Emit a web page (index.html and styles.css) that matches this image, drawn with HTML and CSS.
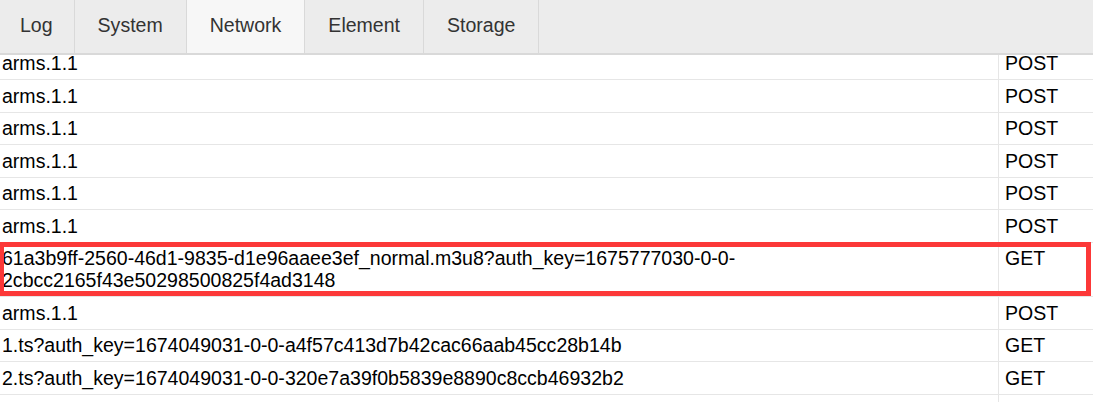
FILE: index.html
```html
<!DOCTYPE html>
<html lang="en">
<head>
<meta charset="utf-8">
<title>Network</title>
<link rel="stylesheet" href="styles.css">
</head>
<body>
<div class="console">
  <nav class="tabs">
    <div class="tab tab-short">Log</div>
    <div class="tab">System</div>
    <div class="tab active">Network</div>
    <div class="tab">Element</div>
    <div class="tab">Storage</div>
  </nav>
  <div class="list">
    <div class="row"><div class="name">arms.1.1</div><div class="method">POST</div></div>
    <div class="row"><div class="name">arms.1.1</div><div class="method">POST</div></div>
    <div class="row"><div class="name">arms.1.1</div><div class="method">POST</div></div>
    <div class="row"><div class="name">arms.1.1</div><div class="method">POST</div></div>
    <div class="row"><div class="name">arms.1.1</div><div class="method">POST</div></div>
    <div class="row"><div class="name">arms.1.1</div><div class="method">POST</div></div>
    <div class="row marked"><div class="name">61a3b9ff-2560-46d1-9835-d1e96aaee3ef_normal.m3u8?auth_key=1675777030-0-0-2cbcc2165f43e50298500825f4ad3148</div><div class="method">GET</div></div>
    <div class="row"><div class="name">arms.1.1</div><div class="method">POST</div></div>
    <div class="row"><div class="name">1.ts?auth_key=1674049031-0-0-a4f57c413d7b42cac66aab45cc28b14b</div><div class="method">GET</div></div>
    <div class="row"><div class="name">2.ts?auth_key=1674049031-0-0-320e7a39f0b5839e8890c8ccb46932b2</div><div class="method">GET</div></div>
    <div class="row"><div class="name">&nbsp;</div><div class="method">&nbsp;</div></div>
  </div>
</div>
</body>
</html>
```
FILE: styles.css
```css
html, body {
  margin: 0;
  padding: 0;
  height: 100%;
  overflow: hidden;
  background: #fff;
}

.console {
  font-family: "Liberation Sans", Arial, sans-serif;
  font-size: 19.55px;
  color: #000;
}

.tabs {
  position: relative;
  z-index: 1;
  display: flex;
  height: 53px;
  background: #ececec;
  border-bottom: 2px solid #d9d9d9;
}

.tab {
  line-height: 51px;
  padding: 0 23px;
  border-right: 1px solid #d9d9d9;
  color: #333;
}

.tab-short {
  padding: 0 21px 0 20px;
}

.tab.active {
  background: #f7f7f7;
}

.list {
  margin-top: -7.5px;
}

.row {
  position: relative;
  display: grid;
  grid-template-columns: 998px 1fr;
  border-bottom: 1px solid #e6e6e6;
  line-height: 22px;
}

.name {
  padding: 4.75px 4px 4.75px 2px;
  overflow-wrap: break-word;
}

.method {
  padding: 4.75px 6px;
  border-left: 1px solid #e6e6e6;
}

.marked::after {
  content: "";
  position: absolute;
  top: -0.5px;
  bottom: 0;
  left: -1px;
  right: 2px;
  border: 5px solid #fc3838;
  pointer-events: none;
}
```
